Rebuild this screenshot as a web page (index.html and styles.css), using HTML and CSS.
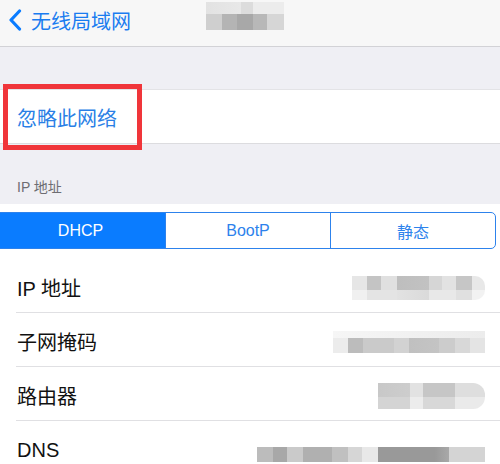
FILE: index.html
```html
<!DOCTYPE html>
<html>
<head>
  <title>IP 地址</title>
  <link rel="stylesheet" href="styles.css">
</head>
<body>
  <div class="navbar">
    <a class="back">
      <svg class="chevron" width="14" height="22" viewBox="0 0 14 22">
        <path d="M11.5 2 L3 11 L11.5 20" fill="none" stroke="#0a7cff" stroke-width="3.2" stroke-linecap="round" stroke-linejoin="round"/>
      </svg>
      <span>无线局域网</span>
    </a>
    <div class="blur blur-title"></div>
  </div>

  <div class="group-gap"></div>

  <div class="forget-row">
    <span class="forget-text">忽略此网络</span>
    <div class="mark"></div>
  </div>

  <div class="section-header">IP 地址</div>

  <div class="panel">
    <div class="segmented">
      <div class="seg active">DHCP</div>
      <div class="seg">BootP</div>
      <div class="seg">静态</div>
    </div>

    <div class="rows">
      <div class="row">
        <span class="label">IP 地址</span>
        <div class="blur blur-ip"></div>
      </div>
      <div class="row">
        <span class="label">子网掩码</span>
        <div class="blur blur-mask"></div>
      </div>
      <div class="row">
        <span class="label">路由器</span>
        <div class="blur blur-router"></div>
      </div>
      <div class="row last">
        <span class="label">DNS</span>
        <div class="blur blur-dns"></div>
      </div>
    </div>
  </div>
</body>
</html>
```

FILE: styles.css
```css
body {
  margin: 0;
  padding: 0;
  width: 500px;
  height: 464px;
  overflow: hidden;
  background-color: #efeff4;
  font-family: "Liberation Sans", "Noto Sans CJK SC", sans-serif;
  color: #111;
}

.navbar {
  height: 46px;
  background-color: #f7f7f7;
  border-bottom: 1px solid #d2d2d6;
  display: flex;
  align-items: center;
}

.back {
  display: flex;
  align-items: center;
  padding-left: 8px;
  color: #1a7cf0;
  font-size: 20px;
  gap: 9px;
  margin-top: -6px;
}

.chevron {
  display: block;
}

.blur-title {
  margin-left: 75px;
  margin-top: -14px;
  width: 78px;
  height: 28px;
  background:
    linear-gradient(90deg, #e2e2e2 0, #e8e8e8 45%, #dcdcdc 45%, #dcdcdc 60%, #ececec 60%, #ececec 100%) top / 100% 12px no-repeat,
    linear-gradient(90deg, #cfcfcf 0, #cfcfcf 20%, #b4b4b4 20%, #b4b4b4 40%, #a8a8a8 40%, #a8a8a8 60%, #b8b8b8 60%, #b8b8b8 78%, #d6d6d6 78%) bottom / 100% 16px no-repeat;
}

.group-gap {
  height: 42px;
}

.forget-row {
  position: relative;
  height: 53px;
  background-color: #fff;
  border-top: 1px solid #e3e3e6;
  border-bottom: 1px solid #dcdcdf;
  display: flex;
  align-items: center;
  padding-left: 17px;
}

.forget-text {
  color: #2a7fe6;
  font-size: 20px;
  margin-top: 2px;
}

.mark {
  position: absolute;
  left: 3px;
  top: -6px;
  width: 129px;
  height: 56px;
  border: 5px solid #f0353a;
}

.section-header {
  height: 60px;
  padding-left: 17px;
  box-sizing: border-box;
  padding-top: 32px;
  font-size: 14px;
  color: #6d6d72;
}

.panel {
  background-color: #fff;
  padding-top: 8px;
  height: 260px;
}

.segmented {
  display: flex;
  height: 37px;
  margin-left: -5px;
  width: 501px;
  border: 1px solid #2d82ec;
  border-radius: 5px;
  box-sizing: border-box;
  overflow: hidden;
}

.seg {
  flex: 1;
  display: flex;
  align-items: center;
  justify-content: center;
  font-size: 16px;
  color: #2d82ec;
  border-left: 1px solid #2d82ec;
}

.seg:first-child {
  border-left: none;
}

.seg.active {
  background-color: #0a7cff;
  color: #fff;
  flex: 0 0 169px;
}

.rows {
  margin-top: 10px;
}

.row {
  display: flex;
  align-items: center;
  justify-content: space-between;
  height: 54px;
  margin-left: 16px;
  padding-right: 15px;
  padding-top: 4px;
  box-sizing: border-box;
  border-bottom: 1px solid #e0e0e3;
}

.row.last {
  border-bottom: none;
}

.label {
  font-size: 20px;
  padding-left: 1px;
}

.blur-ip {
  width: 133px;
  height: 24px;
  border-radius: 0 10px 10px 0;
  background:
    linear-gradient(90deg, #e6e6e6 0, #e6e6e6 11%, #c4c4c4 11%, #c4c4c4 22%, #e0e0e0 22%, #e0e0e0 34%, #bebebe 34%, #c2c2c2 58%, #d6d6d6 58%, #d6d6d6 68%, #e2e2e2 68%, #e2e2e2 78%, #c6c6c6 78%, #c6c6c6 90%, #e8e8e8 90%) top / 100% 14px no-repeat,
    linear-gradient(90deg, #f0f0f0 0, #f0f0f0 11%, #e4e4e4 11%, #e4e4e4 34%, #e2e2e2 34%, #dadada 58%, #e8e8e8 58%, #e8e8e8 78%, #e0e0e0 78%, #e0e0e0 90%, #f2f2f2 90%) bottom / 100% 10px no-repeat;
}

.blur-mask {
  width: 152px;
  height: 22px;
  background:
    linear-gradient(90deg, #ececec 0, #ececec 10%, #bcbcbc 10%, #bcbcbc 20%, #cacaca 20%, #cacaca 40%, #d2d2d2 40%, #d2d2d2 50%, #c0c0c0 50%, #c4c4c4 70%, #cccccc 70%, #cccccc 80%, #d8d8d8 80%, #d8d8d8 90%, #e4e4e4 90%) bottom / 100% 15px no-repeat,
    linear-gradient(90deg, #f6f6f6 0, #ececec 100%) top / 100% 7px no-repeat;
}

.blur-router {
  width: 107px;
  height: 26px;
  border-radius: 0 12px 12px 0;
  background:
    linear-gradient(90deg, #c8c8c8 0, #cdcdcd 30%, #e2e2e2 30%, #e2e2e2 42%, #c6c6c6 42%, #c6c6c6 72%, #dedede 72%) top / 100% 14px no-repeat,
    linear-gradient(90deg, #d4d4d4 0, #d4d4d4 30%, #ececec 30%, #ececec 42%, #d8d8d8 42%, #d8d8d8 72%, #eaeaea 72%) bottom / 100% 12px no-repeat;
}

.blur-dns {
  width: 228px;
  height: 15px;
  margin-top: 8px;
  background: linear-gradient(90deg, #bcbcbc 0, #bcbcbc 7%, #a8a8a8 7%, #a8a8a8 13%, #cacaca 13%, #cacaca 20%, #b0b0b0 20%, #b0b0b0 33%, #c0c0c0 33%, #c0c0c0 40%, #d6d6d6 40%, #d6d6d6 46%, #e8e8e8 46%, #e8e8e8 53%, #999 53%, #999 78%, #a8a8a8 84%, #d4d4d4 84%);
}
```
